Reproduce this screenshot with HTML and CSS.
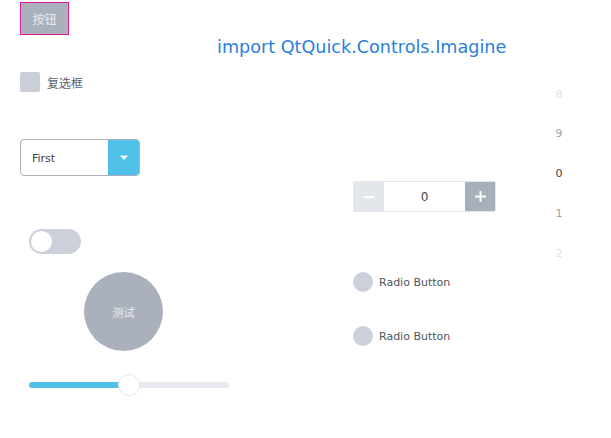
FILE: index.html
```html
<!DOCTYPE html>
<html>
<head>
<meta charset="utf-8">
<link rel="stylesheet" href="styles.css">
</head>
<body>
<div class="page">
  <div class="left">
    <button class="btn">按钮</button>
    <label class="check"><span class="box"></span><span class="check-label">复选框</span></label>
    <div class="combo"><span class="combo-text">First</span><span class="combo-arrow"><svg width="10" height="6" viewBox="0 0 10 6"><path d="M1 0.5 L9 0.5 L5 5 Z" fill="#fff"/></svg></span></div>
    <div class="switch"><span class="knob"></span></div>
    <div class="round">测试</div>
    <div class="slider"><span class="fill"></span><span class="handle"></span></div>
  </div>
  <div class="right">
    <div class="title">import QtQuick.Controls.Imagine</div>
    <div class="lower">
      <div class="controls">
        <div class="spin">
          <span class="spin-minus"><svg width="10" height="2" viewBox="0 0 10 2"><rect width="10" height="2" fill="#fff"/></svg></span>
          <span class="spin-value">0</span>
          <span class="spin-plus"><svg width="11" height="11" viewBox="0 0 11 11"><rect x="0" y="4.5" width="11" height="2" fill="#fff"/><rect x="4.5" y="0" width="2" height="11" fill="#fff"/></svg></span>
        </div>
        <div class="radio"><span class="dot"></span><span class="radio-label">Radio Button</span></div>
        <div class="radio"><span class="dot"></span><span class="radio-label">Radio Button</span></div>
      </div>
      <div class="tumbler">
        <span class="t t2">8</span>
        <span class="t t1">9</span>
        <span class="t t0">0</span>
        <span class="t t1">1</span>
        <span class="t t2">2</span>
      </div>
    </div>
  </div>
</div>
</body>
</html>
```
FILE: styles.css
```css
* { box-sizing: border-box; }
html, body { margin: 0; padding: 0; background: #fff; }
body { width: 611px; height: 438px; overflow: hidden; font-family: "DejaVu Sans", "Noto Sans CJK SC", sans-serif; color: #4e535b; }
.page { display: flex; }
.left { width: 217px; padding-left: 20px; display: flex; flex-direction: column; align-items: flex-start; }
.btn {
  margin-top: 2px; width: 49px; height: 33px; padding: 0;
  background: #aab1bd; border: 1px solid #e020a0; border-radius: 0;
  color: #e6e8ec; font-family: "Noto Sans CJK SC", sans-serif; font-size: 12px;
}
.check { margin-top: 37px; display: flex; align-items: center; height: 20px; }
.box { width: 20px; height: 20px; background: #c9ced7; border-radius: 2px; }
.check-label { margin-left: 7px; font-family: "Noto Sans CJK SC", sans-serif; font-size: 12px; color: #5a5f67; }
.combo {
  margin-top: 47px; width: 120px; height: 37px; display: flex;
  border: 1px solid #aab1bb; border-radius: 4px; overflow: hidden;
}
.combo-text { flex: 1; padding-left: 11px; padding-top: 1px; display: flex; align-items: center; font-size: 11px; color: #3e434a; }
.combo-arrow { width: 31px; background: #4fc1e9; display: flex; align-items: center; justify-content: center; }
.switch { margin-top: 53px; margin-left: 9px; width: 52px; height: 25px; border-radius: 13px; background: #cbd0d9; padding: 2px; display: flex; }
.knob { width: 21px; height: 21px; border-radius: 50%; background: #fff; }
.round {
  margin-top: 18px; margin-left: 64px; width: 79px; height: 79px; border-radius: 50%;
  background: #aab1bd; color: #e8eaee; display: flex; align-items: center; justify-content: center;
  font-family: "Noto Sans CJK SC", sans-serif; font-size: 11px;
}
.slider { margin-top: 31px; margin-left: 9px; width: 200px; height: 6px; border-radius: 3px; background: #e6e9ed; position: relative; }
.fill { position: absolute; left: 0; top: 0; height: 6px; width: 100px; border-radius: 3px; background: #4fc1e9; }
.handle { position: absolute; left: 89px; top: -8px; width: 22px; height: 22px; border-radius: 50%; background: #fff; border: 1px solid #e3e6ea; }
.right { flex: 1; display: flex; flex-direction: column; }
.title { margin-top: 37px; font-size: 17.6px; color: #2a80dc; height: 25px; white-space: nowrap; }
.lower { display: flex; }
.controls { margin-left: 136px; width: 143px; display: flex; flex-direction: column; }
.spin { margin-top: 119px; height: 31px; width: 143px; display: flex; border: 1px solid #e3e6ea; border-radius: 2px; overflow: hidden; }
.spin-minus { width: 30px; background: #e3e7ec; display: flex; align-items: center; justify-content: center; }
.spin-plus { width: 30px; background: #a7afbb; display: flex; align-items: center; justify-content: center; }
.spin-value { flex: 1; display: flex; align-items: center; justify-content: center; font-size: 12px; color: #3e434a; }
.radio { display: flex; align-items: center; height: 20px; margin-top: 60px; }
.radio + .radio { margin-top: 34px; }
.dot { width: 20px; height: 20px; border-radius: 50%; background: #cbd0d9; }
.radio-label { margin-left: 6px; font-size: 11px; color: #4e535b; }
.tumbler { margin-left: 48px; width: 30px; display: flex; flex-direction: column; align-items: center; margin-top: 22.5px; }
.t { height: 39.8px; line-height: 20px; font-size: 11px; }
.t0 { color: #3a3f46; }
.t1 { color: #a0a5ad; }
.t2 { color: #dfe2e6; }
```
